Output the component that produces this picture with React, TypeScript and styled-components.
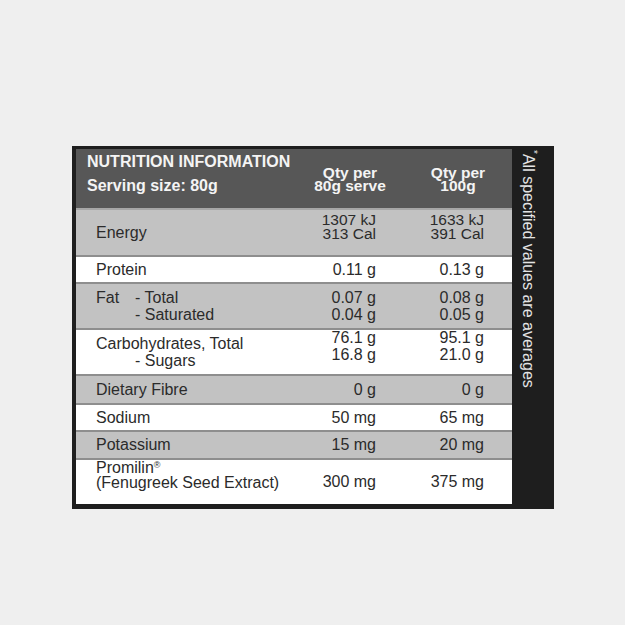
import React from "react";
import styled, { createGlobalStyle } from "styled-components";

const GlobalStyle = createGlobalStyle`
  html, body { margin: 0; padding: 0; background: #efefef; }
  body { font-family: "Liberation Sans", Arial, sans-serif; }
`;

const Page = styled.div`
  width: 625px;
  height: 625px;
  box-sizing: border-box;
  padding: 146px 0 0 72px;
  background: #efefef;
`;

const Card = styled.div`
  display: flex;
  width: 482px;
  height: 363px;
  box-sizing: border-box;
  padding: 3px 0 5px 4px;
  background: #1e1e1e;
`;

const Table = styled.div`
  display: flex;
  flex-direction: column;
  width: 436px;
  flex: none;
`;

const Row = styled.div<{ $h: number; $shade: "head" | "gray" | "white"; $line?: string }>`
  display: grid;
  grid-template-columns: 220px 108px 108px;
  height: ${(p) => p.$h}px;
  box-sizing: border-box;
  background: ${(p) => (p.$shade === "head" ? "#575757" : p.$shade === "gray" ? "#c2c2c2" : "#ffffff")};
  border-top: ${(p) => (p.$shade === "head" ? "none" : `2px solid ${p.$line ?? "#8e8e8e"}`)};
  color: #2b2b2b;
  font-size: 16px;
`;

const HeadLabel = styled.div`
  align-self: end;
  padding: 0 0 10px 11px;
  color: #f4f4f4;
  font-weight: bold;
  font-size: 16px;
  line-height: 24px;
  white-space: nowrap;
`;

const HeadQty = styled.div`
  align-self: end;
  padding-bottom: 16px;
  color: #f4f4f4;
  font-weight: bold;
  font-size: 15.5px;
  line-height: 13px;
  text-align: center;
  white-space: nowrap;
`;

const Label = styled.div<{ $top?: number; $lh?: number }>`
  align-self: ${(p) => (p.$top !== undefined ? "start" : "center")};
  margin-top: ${(p) => p.$top ?? 0}px;
  padding-left: 20px;
  line-height: ${(p) => p.$lh ?? 18}px;
  white-space: nowrap;
`;

const Value = styled.div<{ $top?: number; $lh?: number; $size?: number }>`
  align-self: ${(p) => (p.$top !== undefined ? "start" : "center")};
  margin-top: ${(p) => p.$top ?? 0}px;
  padding-right: 28px;
  text-align: right;
  font-size: ${(p) => p.$size ?? 16}px;
  line-height: ${(p) => p.$lh ?? 18}px;
  white-space: nowrap;
`;

const Split = styled.div`
  display: flex;
`;

const Lead = styled.span`
  width: 39px;
  flex: none;
`;

const Sub = styled.div`
  padding-left: 39px;
`;

const Reg = styled.sup`
  font-size: 9px;
  vertical-align: 5px;
  line-height: 0;
`;

const Side = styled.div`
  width: 42px;
  flex: none;
  box-sizing: border-box;
  padding: 1px 11px 0 0;
  writing-mode: vertical-rl;
  color: #e4e4e4;
  font-size: 16px;
  line-height: 20px;
  white-space: nowrap;
`;

const Star = styled.span`
  font-size: 10px;
  vertical-align: 5px;
`;

type Line = string | React.ReactNode;

const Lines: React.FC<{ items: Line[] }> = ({ items }) => (
  <>
    {items.map((t, i) => (
      <div key={i}>{t}</div>
    ))}
  </>
);

export default function App() {
  return (
    <Page>
      <GlobalStyle />
      <Card>
        <Table>
          <Row $h={59} $shade="head">
            <HeadLabel>
              <div>NUTRITION INFORMATION</div>
              <div>Serving size: 80g</div>
            </HeadLabel>
            <HeadQty>
              <Lines items={["Qty per", "80g serve"]} />
            </HeadQty>
            <HeadQty>
              <Lines items={["Qty per", "100g"]} />
            </HeadQty>
          </Row>

          <Row $h={47} $shade="gray" $line="#a6a6a6">
            <Label>Energy</Label>
            <Value $top={3} $lh={13.5} $size={15.5}>
              <Lines items={["1307 kJ", "313 Cal"]} />
            </Value>
            <Value $top={3} $lh={13.5} $size={15.5}>
              <Lines items={["1633 kJ", "391 Cal"]} />
            </Value>
          </Row>

          <Row $h={27} $shade="white">
            <Label>Protein</Label>
            <Value>0.11 g</Value>
            <Value>0.13 g</Value>
          </Row>

          <Row $h={46} $shade="gray">
            <Label $lh={17}>
              <Split>
                <Lead>Fat</Lead>
                <div>
                  <div>- Total</div>
                  <div>- Saturated</div>
                </div>
              </Split>
            </Label>
            <Value $lh={17}>
              <Lines items={["0.07 g", "0.04 g"]} />
            </Value>
            <Value $lh={17}>
              <Lines items={["0.08 g", "0.05 g"]} />
            </Value>
          </Row>

          <Row $h={46} $shade="white">
            <Label $lh={17}>
              <div>Carbohydrates, Total</div>
              <Sub>- Sugars</Sub>
            </Label>
            <Value $top={-1} $lh={17}>
              <Lines items={["76.1 g", "16.8 g"]} />
            </Value>
            <Value $top={-1} $lh={17}>
              <Lines items={["95.1 g", "21.0 g"]} />
            </Value>
          </Row>

          <Row $h={29} $shade="gray">
            <Label>Dietary Fibre</Label>
            <Value>0 g</Value>
            <Value>0 g</Value>
          </Row>

          <Row $h={27} $shade="white">
            <Label>Sodium</Label>
            <Value>50 mg</Value>
            <Value>65 mg</Value>
          </Row>

          <Row $h={28} $shade="gray">
            <Label>Potassium</Label>
            <Value>15 mg</Value>
            <Value>20 mg</Value>
          </Row>

          <Row $h={46} $shade="white">
            <Label $top={1} $lh={14.5}>
              <div>
                Promilin<Reg>®</Reg>
              </div>
              <div>(Fenugreek Seed Extract)</div>
            </Label>
            <Value>300 mg</Value>
            <Value>375 mg</Value>
          </Row>
        </Table>
        <Side>
          <Star>*</Star>All specified values are averages
        </Side>
      </Card>
    </Page>
  );
}
